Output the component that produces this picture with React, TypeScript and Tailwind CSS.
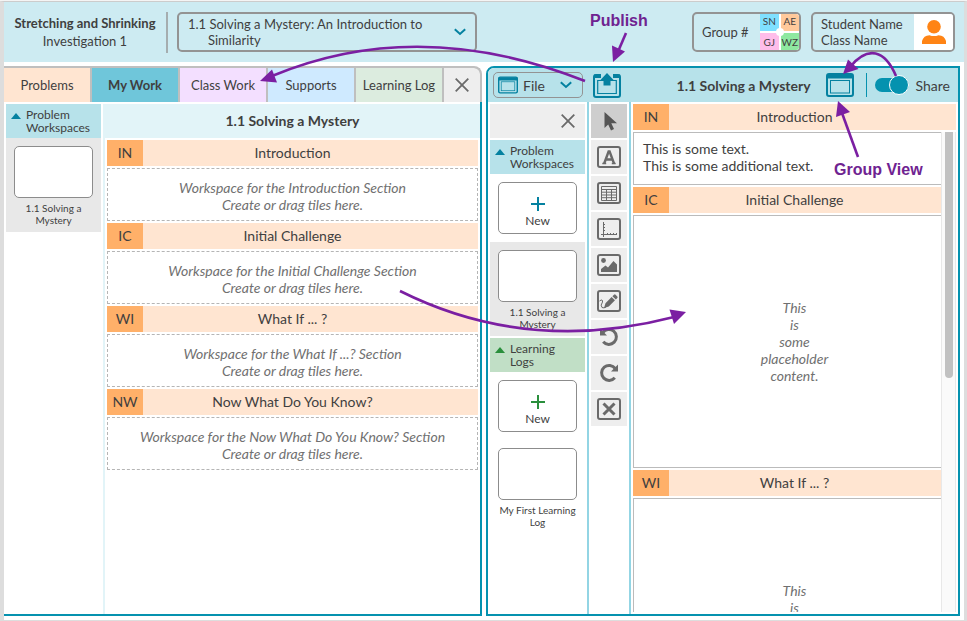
import { useState } from "react";
import type { ReactNode } from "react";
import { clsx } from "clsx";

const problems = ["1.1 Solving a Mystery: An Introduction to Similarity"];

const sections = [
  { code: "IN", title: "Introduction", name: "Introduction" },
  { code: "IC", title: "Initial Challenge", name: "Initial Challenge" },
  { code: "WI", title: "What If ... ?", name: "What If ...?" },
  { code: "NW", title: "Now What Do You Know?", name: "Now What Do You Know?" },
];

const tabs = [
  { label: "Problems", color: "bg-[#ffe5d1]" },
  { label: "My Work", color: "bg-[#6fc6da] font-bold" },
  { label: "Class Work", color: "bg-[#f3dfff]" },
  { label: "Supports", color: "bg-[#cfeaff]" },
  { label: "Learning Log", color: "bg-[#dcecdf]" },
];

const group = [
  { initials: "SN", color: "bg-[#7fe0ff]" },
  { initials: "AE", color: "bg-[#ffc99b]" },
  { initials: "GJ", color: "bg-[#ffbdea]" },
  { initials: "WZ", color: "bg-[#8fe8a0]" },
];

function Chevron() {
  return (
    <svg className="h-2 w-3 shrink-0" viewBox="0 0 12 8" fill="none" stroke="#0481a0" strokeWidth="2">
      <path d="M0.8 1.2L6 6L11.2 1.2" />
    </svg>
  );
}

function Close() {
  return (
    <svg className="size-[14px]" viewBox="0 0 14 14" fill="none" stroke="#6a6a6a" strokeWidth="1.8">
      <path d="M0.7 0.7L13.3 13.3M13.3 0.7L0.7 13.3" />
    </svg>
  );
}

function WindowIcon({ className }: { className: string }) {
  return (
    <svg className={className} viewBox="0 0 28 24" fill="none" stroke="#0481a0">
      <rect x="1" y="1" width="26" height="22" rx="2" strokeWidth="2" />
      <path d="M1 3.3H27" strokeWidth="4.6" />
      <rect x="4.5" y="7.5" width="19" height="12.5" strokeWidth="1" />
    </svg>
  );
}

function PublishIcon() {
  return (
    <svg className="h-[25px] w-7" viewBox="0 0 28 25" fill="none" stroke="#0481a0">
      <path d="M8 2H3Q1 2 1 4V22Q1 24 3 24H25Q27 24 27 22V4Q27 2 25 2H20" strokeWidth="2" />
      <path d="M1 3.2H8M20 3.2H27" strokeWidth="3.6" />
      <path d="M9 7.5H4.7V20.5H23.3V7.5H19" strokeWidth="1.2" />
      <path d="M14 0L21.5 8H17.5V12.5H10.5V8H6.5Z" fill="#0481a0" stroke="none" />
    </svg>
  );
}

const frame = <rect x="7" y="7" width="22" height="20" rx="2" fill="none" stroke="#6a6a6a" strokeWidth="2" />;

const tools: { name: string; art: ReactNode }[] = [
  {
    name: "Select",
    art: <path d="M13.5 8V24L17.2 20.6L20 26.4L23 25L20.3 19.3H26Z" fill="#555" />,
  },
  {
    name: "Text",
    art: (
      <>
        {frame}
        <path d="M13.2 23.5L17.6 11.5H18.6L23 23.5M14.6 19.5H21.6" fill="none" stroke="#6a6a6a" strokeWidth="2.4" />
        <path d="M11.3 23.5H15.2M20.800 23.500H24.700" stroke="#6a6a6a" strokeWidth="1.4" />
      </>
    ),
  },
  {
    name: "Table",
    art: (
      <>
        {frame}
        <path d="M10.5 10.5H25.5V24.5H10.5ZM10.5 13.5H25.5M10.5 16.2H25.5M10.5 19H25.5M10.5 21.7H25.5M15.5 13.5V24.5M20.5 13.5V24.5" fill="none" stroke="#6a6a6a" />
      </>
    ),
  },
  {
    name: "Graph",
    art: (
      <>
        {frame}
        <path d="M12.5 10V25M10 22.5H26M12 12.5H14M12 15.5H14M12 18.5H14M16.5 21V23M19.5 21V23M22.5 21V23M25.5 21V23" fill="none" stroke="#6a6a6a" />
      </>
    ),
  },
  {
    name: "Image",
    art: (
      <>
        {frame}
        <circle cx="12.5" cy="12.5" r="2.4" fill="#6a6a6a" />
        <path d="M10 24V21L14.5 17.5L17 19.5L22.5 13L26 16.5V24Z" fill="#6a6a6a" />
      </>
    ),
  },
  {
    name: "Draw",
    art: (
      <>
        {frame}
        <path d="M8.5 17Q12 14.5 11.5 18Q9 21.5 11 23.5Q13 24.5 15 23" fill="none" stroke="#6a6a6a" />
        <path d="M13 24L14.5 19.2L20.6 13L24 16.3L17.8 22.5ZM21.4 12.2L23 10.7Q23.8 10 24.6 10.7L26.3 12.4Q27 13.2 26.3 14L24.8 15.5Z" fill="#6a6a6a" />
      </>
    ),
  },
  {
    name: "Undo",
    art: (
      <>
        <path d="M11.8 12.5A7.5 7.5 0 1 1 12.2 21.8" fill="none" stroke="#6a6a6a" strokeWidth="3" />
        <path d="M9 8.5V15.5H16Z" fill="#6a6a6a" />
      </>
    ),
  },
  {
    name: "Redo",
    art: (
      <>
        <path d="M24.2 12.5A7.5 7.5 0 1 0 23.8 21.8" fill="none" stroke="#6a6a6a" strokeWidth="3" />
        <path d="M27 8.5V15.5H20Z" fill="#6a6a6a" />
      </>
    ),
  },
  {
    name: "Delete",
    art: (
      <>
        {frame}
        <path d="M12.5 11.5L23.5 22.5M23.5 11.5L12.5 22.5" fill="none" stroke="#6a6a6a" strokeWidth="3" />
      </>
    ),
  },
];

function GroupHeading({ first, second, green = false }: { first: string; second: string; green?: boolean }) {
  return (
    <button
      type="button"
      className={clsx(
        "flex h-[34px] w-full shrink-0 items-start gap-[5px] pt-1 pl-[5px] text-left text-[12px] leading-[13px]",
        green ? "bg-[#c1dfc6]" : "bg-[#b7e2ea]",
      )}
    >
      <svg className="mt-[5px] h-[6px] w-[10px]" viewBox="0 0 10 6" fill={green ? "#2a8f3c" : "#0481a0"}>
        <path d="M0 6L5 0L10 6Z" />
      </svg>
      <span>
        {first}
        <br />
        {second}
      </span>
    </button>
  );
}

const thumb = "h-[52px] w-[79px] shrink-0 rounded-[5px] border border-[#8c8c8c] bg-white";

function Thumbnail({ label, selected = false }: { label: string; selected?: boolean }) {
  return (
    <button
      type="button"
      className={clsx("flex h-[94px] w-full shrink-0 flex-col items-center gap-1 pt-2 text-[10px] leading-3", selected && "bg-[#e8e8e8]")}
    >
      <span className={thumb} />
      <span className="px-2">{label}</span>
    </button>
  );
}

function NewButton({ color }: { color: string }) {
  return (
    <div className="flex shrink-0 justify-center py-2">
      <button type="button" className={clsx(thumb, "flex flex-col items-center gap-[3px] pt-[14px] text-[12px] leading-[14px]")}>
        <svg className="size-[14px] shrink-0" viewBox="0 0 14 14" stroke={color} strokeWidth="2">
          <path d="M7 0V14M0 7H14" />
        </svg>
        New
      </button>
    </div>
  );
}

function SectionHeading({ code, title }: { code: string; title: string }) {
  return (
    <h3 className="grid h-[26px] shrink-0 grid-cols-1 grid-rows-1 bg-[#ffe5d1]">
      <span className="col-start-1 row-start-1 flex h-full w-9 items-center justify-center bg-[#ffb069] pb-[2px]">{code}</span>
      <span className="col-start-1 row-start-1 flex items-center justify-center pb-[2px]">{title}</span>
    </h3>
  );
}

function Placeholder() {
  return (
    <div className="flex h-[253px] shrink-0 items-center justify-center border border-[#bbb] text-center text-[#707070] italic">
      <p>
        This
        <br />
        is
        <br />
        some
        <br />
        placeholder
        <br />
        content.
      </p>
    </div>
  );
}

function Header() {
  const [problem, setProblem] = useState(problems[0]);
  return (
    <header className="flex h-[60px] shrink-0 items-center bg-[#cdebf2] pr-[9px] text-[13px]">
      <div className="w-[162px] shrink-0 text-center leading-[18px]">
        <h1 className="font-bold">Stretching and Shrinking</h1>
        <p>Investigation 1</p>
      </div>
      <div className="mr-[9px] h-[41px] w-[2px] shrink-0 bg-[#a5adaf]" />
      <div className="grid h-10 w-[300px] grid-cols-1 grid-rows-1 rounded-[5px] border-2 border-[#939393]">
        <div className="col-start-1 row-start-1 flex items-center justify-between pr-[9px] pl-[29px] leading-4">
          <span className="w-[235px] -indent-5">{problem}</span>
          <Chevron />
        </div>
        <select
          aria-label="Problem"
          value={problem}
          onChange={(e) => setProblem(e.target.value)}
          className="col-start-1 row-start-1 cursor-pointer opacity-0"
        >
          {problems.map((p) => (
            <option key={p}>{p}</option>
          ))}
        </select>
      </div>
      <div className="ml-auto flex h-10 w-[109px] shrink-0 items-center justify-between overflow-hidden rounded-[5px] border-2 border-[#939393] pl-2">
        <span>Group #</span>
        <div className="relative grid h-full w-[39px] grid-cols-2 grid-rows-2 gap-[2px] bg-white text-[10px] leading-3">
          {group.map((g, i) => (
            <span key={g.initials} className={clsx("flex items-center justify-center", i < 2 && "pb-1", g.color)}>
              {g.initials}
            </span>
          ))}
          <span className="absolute top-1/2 left-1/2 size-2 -translate-1/2 rounded-full bg-white" />
        </div>
      </div>
      <div className="ml-[10px] flex h-10 w-36 shrink-0 items-center justify-between overflow-hidden rounded-[5px] border-2 border-[#939393] pl-2 leading-4">
        <p>
          Student Name
          <br />
          Class Name
        </p>
        <div className="flex h-full w-[39px] items-center justify-center bg-white">
          <svg className="size-6" viewBox="0 0 24 24" fill="#ff8415">
            <circle cx="12" cy="6.8" r="6.8" />
            <path d="M0 24V21Q1.5 15.5 7.5 15.2Q12 17 16.500 15.2Q22.500 15.500 24 21V24Z" />
          </svg>
        </div>
      </div>
    </header>
  );
}

function LeftPanel() {
  return (
    <section className="flex min-h-0 min-w-0 flex-col pr-[2px]">
      <div className="flex h-9 shrink-0 gap-[2px] overflow-hidden rounded-tr-[8px] border-t-2 border-r-2 border-[#bfbfbf] bg-[#bfbfbf] text-[13px]">
        {tabs.map((t) => (
          <button key={t.label} type="button" className={clsx("min-w-0 flex-1 whitespace-nowrap", t.color)}>
            {t.label}
          </button>
        ))}
        <button type="button" aria-label="Close" className="flex w-9 items-center justify-center rounded-tr-[6px] bg-[#eee]">
          <Close />
        </button>
      </div>
      <div className="flex min-h-0 flex-1 border-r-2 border-b-2 border-[#0592af] pt-[2px]">
        <aside className="mx-[2px] w-[95px] shrink-0">
          <GroupHeading first="Problem" second="Workspaces" />
          <Thumbnail label="1.1 Solving a Mystery" selected />
        </aside>
        <div className="flex min-w-0 flex-1 flex-col border-l-2 border-[#e2f4f8]">
          <h2 className="flex h-[34px] shrink-0 items-center justify-center bg-[#e2f4f8] pb-[2px] font-bold">1.1 Solving a Mystery</h2>
          <div className="flex flex-col gap-[2px] p-[2px]">
            {sections.map((s) => (
              <div key={s.code} className="flex flex-col gap-[2px]">
                <SectionHeading code={s.code} title={s.title} />
                <p className="flex h-[53px] items-center justify-center border border-dashed border-[#b5b5b5] pt-[2px] text-center text-[#707070] italic">
                  <span>
                    Workspace for the {s.name} Section
                    <br />
                    Create or drag tiles here.
                  </span>
                </p>
              </div>
            ))}
          </div>
        </div>
      </div>
    </section>
  );
}

function RightPanel() {
  const [shared, setShared] = useState(true);
  const [tool, setTool] = useState("Select");
  return (
    <section className="flex min-h-0 min-w-0 flex-col pr-1 pl-[2px]">
      <div className="flex min-h-0 flex-1 flex-col overflow-hidden rounded-tl-[8px] border-2 border-[#0592af]">
        <div className="flex h-[34px] shrink-0 items-center bg-[#b7e2ea] pr-2 pl-[5px]">
          <button type="button" className="flex h-[26px] w-[90px] items-center rounded-[5px] border border-[#939393] pr-[10px] pl-1">
            <WindowIcon className="mr-[5px] h-[18px] w-5" />
            File
            <span className="ml-auto">
              <Chevron />
            </span>
          </button>
          <button type="button" aria-label="Publish" className="ml-[10px]">
            <PublishIcon />
          </button>
          <h2 className="ml-auto font-bold">1.1 Solving a Mystery</h2>
          <button type="button" aria-label="Group view" className="ml-[15px]">
            <WindowIcon className="h-6 w-7" />
          </button>
          <div className="mx-2 ml-3 h-6 w-px bg-[#0592af]" />
          <label className="flex items-center gap-[7px]">
            <input type="checkbox" className="peer sr-only" checked={shared} onChange={(e) => setShared(e.target.checked)} />
            <span className="flex h-[14px] w-[34px] items-center justify-start rounded-full bg-[#8c8c8c] peer-checked:justify-end peer-checked:bg-[#0592af]">
              <span className="size-5 shrink-0 rounded-full border border-white bg-[#0592af]" />
            </span>
            Share
          </label>
        </div>
        <div className="flex min-h-0 flex-1">
          <aside className="flex w-[99px] shrink-0 flex-col overflow-hidden px-[2px] pt-[2px]">
            <div className="mb-[2px] flex h-[34px] shrink-0 items-center justify-end bg-[#eee] pr-[10px]">
              <button type="button" aria-label="Close workspaces">
                <Close />
              </button>
            </div>
            <GroupHeading first="Problem" second="Workspaces" />
            <NewButton color="#0481a0" />
            <Thumbnail label="1.1 Solving a Mystery" selected />
            <div className="h-[2px] shrink-0" />
            <GroupHeading first="Learning" second="Logs" green />
            <NewButton color="#2a8f3c" />
            <Thumbnail label="My First Learning Log" />
          </aside>
          <div role="toolbar" className="flex shrink-0 flex-col gap-[2px] border-x-2 border-[#93d5e4] p-[2px]">
            {tools.map((t) => (
              <button
                key={t.name}
                type="button"
                aria-label={t.name}
                onClick={() => setTool(t.name)}
                className={clsx("h-[34px] w-9 shrink-0", tool === t.name ? "bg-[#cecece]" : "bg-[#eee]")}
              >
                <svg className="h-[34px] w-9" viewBox="0 0 36 34">
                  {t.art}
                </svg>
              </button>
            ))}
          </div>
          <div className="flex min-w-0 flex-1 flex-col gap-[2px] p-[2px]">
            <SectionHeading code="IN" title="Introduction" />
            <div className="relative min-h-0 flex-1 overflow-hidden">
              <div className="flex flex-col gap-[2px]">
                <p className="h-[53px] border border-[#bbb] px-[9px] py-[7px]">
                  This is some text.
                  <br />
                  This is some additional text.
                </p>
                <SectionHeading code="IC" title="Initial Challenge" />
                <Placeholder />
                <SectionHeading code="WI" title="What If ... ?" />
                <Placeholder />
              </div>
              <div className="absolute inset-y-0 right-0 flex w-[15px] justify-center border-x border-[#e8e8e8] bg-[#fafafa]">
                <div className="h-[246px] w-2 rounded-b-full bg-[#c1c1c1]" />
              </div>
            </div>
          </div>
        </div>
      </div>
    </section>
  );
}

function Annotations() {
  return (
    <div className="pointer-events-none absolute inset-0 overflow-hidden font-['Liberation_Sans',Arial,sans-serif] text-[16px] leading-5 font-bold text-[#6f2391]">
      <svg className="absolute top-0 left-0 h-[621px] w-[967px]" viewBox="0 0 967 621" fill="none" stroke="#7b1fa2" strokeWidth="2.6">
        <path d="M585 80Q418 14 272 75" />
        <path d="M400 290Q528 354 674 316" />
        <path d="M626 32L617 53" />
        <path d="M858 156L842 112" />
        <path d="M896 75C885 49 868 44 850 66" />
        <g fill="#7b1fa2" stroke="none">
          <path d="M260 80L272 68.500L277 81.500Z" />
          <path d="M686 311L669.500 308.500L674 323Z" />
          <path d="M613 61L612 44.500L625 50.500Z" />
          <path d="M838 100L836 116L850 111Z" />
          <path d="M843 73L848 58.500L858.500 68Z" />
        </g>
      </svg>
      <span className="absolute top-[10px] left-[590px]">Publish</span>
      <span className="absolute top-[159px] left-[834px]">Group View</span>
    </div>
  );
}

export default function App() {
  return (
    <div className="relative flex h-screen flex-col border-t border-b border-t-[#f4f4f4] border-b-[#ddd] bg-white font-[Lato,sans-serif] text-[14px] leading-[17px] text-[#3f3f3f]">
      <div className="flex min-h-0 flex-1 flex-col border-t border-r-3 border-l-4 border-[#ddd] border-t-[#ccc] pb-1">
        <Header />
        <main className="mt-1 grid min-h-0 flex-1 grid-cols-2 grid-rows-1">
          <LeftPanel />
          <RightPanel />
        </main>
      </div>
      <Annotations />
    </div>
  );
}
